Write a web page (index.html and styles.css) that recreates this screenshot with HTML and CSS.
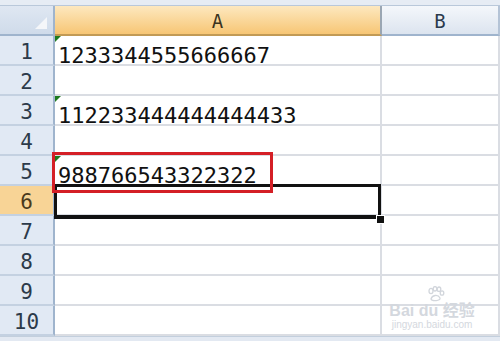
FILE: index.html
```html
<!DOCTYPE html>
<html>
<head>
<meta charset="utf-8">
<link rel="stylesheet" href="styles.css">
</head>
<body>
<div class="sheet">
  <div class="strip"></div>
  <div class="grid">
    <div class="corner"><span class="corner-tri"></span></div>
    <div class="colhead active">A</div>
    <div class="colhead">B</div>

    <div class="rowhead">1</div><div class="cell a"><span class="flag"></span>1233344555666667</div><div class="cell b"></div>
    <div class="rowhead">2</div><div class="cell a"></div><div class="cell b"></div>
    <div class="rowhead">3</div><div class="cell a"><span class="flag"></span>112233444444444433</div><div class="cell b"></div>
    <div class="rowhead">4</div><div class="cell a"></div><div class="cell b"></div>
    <div class="rowhead">5</div><div class="cell a"><span class="flag"></span>988766543322322</div><div class="cell b"></div>
    <div class="rowhead active">6</div><div class="cell a"></div><div class="cell b"></div>
    <div class="rowhead">7</div><div class="cell a"></div><div class="cell b"></div>
    <div class="rowhead">8</div><div class="cell a"></div><div class="cell b"></div>
    <div class="rowhead">9</div><div class="cell a"></div><div class="cell b"></div>
    <div class="rowhead">10</div><div class="cell a"></div><div class="cell b"></div>
  </div>
  <div class="strip bottom"></div>

  <div class="selection"><span class="handle"></span></div>
  <div class="redbox"></div>
  <div class="watermark">
    <svg class="paw" width="20" height="16" viewBox="0 0 20 16">
      <g fill="none" stroke="#d2d6dc" stroke-width="1.3">
        <ellipse cx="5" cy="5" rx="2" ry="2.6"/>
        <ellipse cx="9" cy="2.8" rx="1.8" ry="2.2"/>
        <ellipse cx="13" cy="3.2" rx="1.8" ry="2.2"/>
        <ellipse cx="16" cy="7" rx="1.8" ry="2.2"/>
        <path d="M5 13 C6 9 12 8 14 12 C15 15 6 15.5 5 13 Z"/>
      </g>
    </svg>
    <div class="wm-top">Bai du 经验</div>
    <div class="wm-url">jingyan.baidu.com</div>
  </div>
</div>
</body>
</html>
```
FILE: styles.css
```css
html, body {
  margin: 0;
  padding: 0;
  background: #ffffff;
}
.sheet {
  position: relative;
  width: 500px;
  height: 341px;
  overflow: hidden;
  font-family: "DejaVu Sans Mono", "Liberation Mono", monospace;
}
.strip {
  height: 5px;
  background: #e6ecf4;
  border-bottom: 1px solid #b9c8da;
}
.strip.bottom {
  height: 5px;
  border-bottom: none;
  border-top: 1px solid #c3cfdd;
  background: #e3e9f2;
}
.grid {
  display: grid;
  grid-template-columns: 55px 327px 1fr;
  grid-template-rows: 30px repeat(10, 30px);
}
.corner {
  position: relative;
  background: linear-gradient(#dfe7f2, #cfdbea);
  border-right: 2px solid #9fb4cd;
  border-bottom: 2px solid #9fb4cd;
}
.corner-tri {
  position: absolute;
  right: 6px;
  bottom: 5px;
  width: 0;
  height: 0;
  border-left: 12px solid transparent;
  border-bottom: 12px solid #f4f6f9;
}
.colhead {
  display: flex;
  align-items: center;
  justify-content: center;
  font-size: 19px;
  color: #2b3a4d;
  background: linear-gradient(#f4f7fb, #dce4ef);
  border-right: 2px solid #b4c3d6;
  border-bottom: 2px solid #9fb4cd;
  padding-top: 2px;
  box-sizing: border-box;
}
.colhead.active {
  color: #3a3320;
  background: linear-gradient(#fde8bf, #f7c675);
  border-right: 2px solid #9aa6b3;
  border-bottom: 2px solid #c29a55;
}
.rowhead {
  display: flex;
  align-items: center;
  justify-content: center;
  font-size: 21px;
  color: #2c3a4a;
  background: #e1e9f4;
  border-right: 2px solid #9fb4cd;
  border-bottom: 2px solid #c4d1e1;
  padding-top: 4px;
  box-sizing: border-box;
}
.rowhead.active {
  background: #f8d496;
  color: #4a3a1c;
}
.cell {
  position: relative;
  border-bottom: 2px solid #dadde3;
  border-right: 2px solid #dadde3;
  box-sizing: border-box;
  font-size: 22px;
  color: #111111;
  padding: 7px 0 0 3px;
  white-space: nowrap;
}
.flag {
  position: absolute;
  left: 0;
  top: 0;
  width: 0;
  height: 0;
  border-top: 6px solid #1e7a1e;
  border-right: 6px solid transparent;
}
.selection {
  position: absolute;
  left: 54px;
  top: 184px;
  width: 321px;
  height: 28px;
  border: 3px solid #111111;
  border-bottom-width: 4px;
}
.handle {
  position: absolute;
  right: -7px;
  bottom: -9px;
  width: 7px;
  height: 7px;
  background: #111111;
  border: 1px solid #ffffff;
}
.redbox {
  position: absolute;
  left: 52px;
  top: 152px;
  width: 215px;
  height: 35px;
  border: 3px solid #d41f26;
}
.watermark {
  position: absolute;
  left: 390px;
  top: 286px;
  width: 84px;
  display: flex;
  flex-direction: column;
  align-items: center;
  color: #d4d8de;
  font-family: "Liberation Sans", "Noto Sans CJK SC", sans-serif;
  white-space: nowrap;
}
.paw {
  display: block;
  margin-left: 8px;
}
.wm-top {
  font-size: 16px;
  font-weight: bold;
  line-height: 17px;
}
.wm-url {
  font-size: 10px;
  line-height: 12px;
}
```
